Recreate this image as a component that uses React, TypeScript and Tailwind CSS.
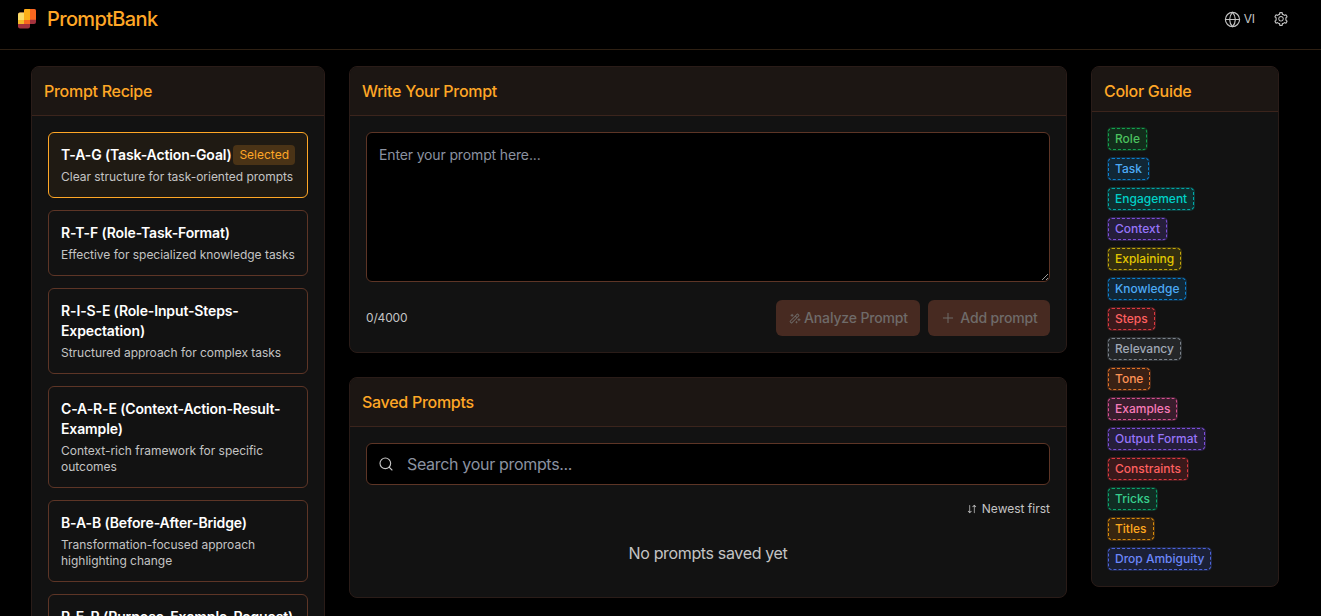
import React from "react";
import { Globe, Search, Plus } from "lucide-react";
import { PiMagicWand, PiArrowsDownUp } from "react-icons/pi";
import { AiOutlineSetting } from "react-icons/ai";

const recipes = [
  { title: "T-A-G (Task-Action-Goal)", text: "Clear structure for task-oriented prompts", selected: true },
  { title: "R-T-F (Role-Task-Format)", text: "Effective for specialized knowledge tasks" },
  { title: "R-I-S-E (Role-Input-Steps-Expectation)", text: "Structured approach for complex tasks" },
  { title: "C-A-R-E (Context-Action-Result-Example)", text: "Context-rich framework for specific outcomes" },
  { title: "B-A-B (Before-After-Bridge)", text: "Transformation-focused approach highlighting change" },
  { title: "P-E-R (Purpose-Example-Request)", text: "Clear purpose with supporting examples" },
];

const tags = [
  { name: "Role", style: "text-[#4cc35f] bg-[#122d1b] border-[#12a150] shadow-[0_0_0_1px_#12361f]" },
  { name: "Task", style: "text-[#4dabf7] bg-[#112736] border-[#0c80cf] shadow-[0_0_0_1px_#112c40]" },
  { name: "Engagement", style: "text-[#00d1c7] bg-[#0f2e2e] border-[#00a8a8] shadow-[0_0_0_1px_#0f3838]" },
  { name: "Context", style: "text-[#9775fa] bg-[#261e3b] border-[#7c4fd8] shadow-[0_0_0_1px_#2c2148]" },
  { name: "Explaining", style: "text-[#e3c800] bg-[#332e10] border-[#c2a70a] shadow-[0_0_0_1px_#3b3410]" },
  { name: "Knowledge", style: "text-[#4dabf7] bg-[#112736] border-[#0c80cf] shadow-[0_0_0_1px_#112c40]" },
  { name: "Steps", style: "text-[#ff6060] bg-[#3a191b] border-[#dc3a3f] shadow-[0_0_0_1px_#451b1e]" },
  { name: "Relevancy", style: "text-[#a0a9b6] bg-[#242628] border-[#7b838c] shadow-[0_0_0_1px_#2b2e31]" },
  { name: "Tone", style: "text-[#ff9355] bg-[#3a2115] border-[#e07328] shadow-[0_0_0_1px_#472717]" },
  { name: "Examples", style: "text-[#f77ab8] bg-[#391d2d] border-[#d6508f] shadow-[0_0_0_1px_#452135]" },
  { name: "Output Format", style: "text-[#9775fa] bg-[#261e3b] border-[#7c4fd8] shadow-[0_0_0_1px_#2c2148]" },
  { name: "Constraints", style: "text-[#ff6060] bg-[#3a191b] border-[#dc3a3f] shadow-[0_0_0_1px_#451b1e]" },
  { name: "Tricks", style: "text-[#38d08e] bg-[#102d23] border-[#0aa56e] shadow-[0_0_0_1px_#10372a]" },
  { name: "Titles", style: "text-[#ffa91f] bg-[#382610] border-[#d98c0b] shadow-[0_0_0_1px_#432c10]" },
  { name: "Drop Ambiguity", style: "text-[#6c87fa] bg-[#1b2036] border-[#4c63d9] shadow-[0_0_0_1px_#1e2543]" },
];

function Logo() {
  return (
    <svg width="18" height="20" viewBox="0 0 18 20">
      <rect x="0" y="3.5" width="12" height="16" rx="2" fill="#a3323d" />
      <rect x="6" y="0" width="12" height="15" rx="2" fill="#a3323d" />
      <path d="M6 1.500a1.500 1.500 0 0 1 1.500-1.500H16a2 2 0 0 1 2 2v8.800H6z" fill="#f9671f" />
      <path d="M6 1.500a1.500 1.500 0 0 1 1.500-1.500H12v11H6z" fill="#fcaf17" />
      <path d="M0 5.500a2 2 0 0 1 2-2h4V15H0z" fill="#fbdc68" />
      <path d="M0 11h12v4H0z" fill="#f5b928" />
      <path d="M6 11h6v4H6z" fill="#f9671f" />
    </svg>
  );
}

function Panel({ title, tight, className, children }: {
  title: string;
  tight?: boolean;
  className: string;
  children: React.ReactNode;
}) {
  return (
    <section className={`overflow-hidden rounded-lg border border-[#2a1c18] bg-[#121212] ${className}`}>
      <h2
        className={`border-b border-[#3b241c] bg-[#1c1613] px-3 pt-3 text-base font-[550] tracking-[-0.28px] text-[#ffa726] ${tight ? "pb-2" : "pb-3"}`}
      >
        {title}
      </h2>
      {children}
    </section>
  );
}

export default function App() {
  return (
    <div className="h-[616px] overflow-hidden bg-black font-['Inter',sans-serif] text-[#c4c4c4]">
      <header className="flex h-[50px] items-start justify-between border-b border-[#2e2013] pr-8 pl-[18px]">
        <div className="flex items-center gap-[11px] pt-[5px]">
          <Logo />
          <h1 className="text-xl leading-7 font-[550] tracking-[-0.65px] text-[#ffa726]">PromptBank</h1>
        </div>
        <div className="flex items-center gap-[18px] pt-[11px]">
          <button className="flex h-4 items-center gap-[3px] text-xs tracking-[-0.1px]">
            <Globe size={17} strokeWidth={1.6} />
            VI
          </button>
          <AiOutlineSetting size={16} />
        </div>
      </header>

      <main className="flex items-start gap-6 pt-4 pl-[31px]">
        <Panel title="Prompt Recipe" className="h-[760px] w-[294px] shrink-0">
          <div className="flex flex-col gap-3 p-4">
            {recipes.map((r) => (
              <div
                key={r.title}
                className={`rounded-md border p-3 ${r.selected ? "border-[#ffa726] bg-[#1f1a13]" : "border-[#5d3526]"}`}
              >
                <div className="flex items-center justify-between">
                  <h3 className="text-sm leading-5 font-semibold tracking-[-0.13px] whitespace-normal text-white">{r.title}</h3>
                  {r.selected && (
                    <span className="rounded bg-[#4a3316] px-1.5 py-0.5 text-xs leading-4 text-[#ffa726]">Selected</span>
                  )}
                </div>
                <p className="mt-1 -mr-1 text-xs leading-4 tracking-[-0.02px]">{r.text}</p>
              </div>
            ))}
          </div>
        </Panel>

        <div className="flex w-[718px] shrink-0 flex-col gap-6">
          <Panel title="Write Your Prompt" className="h-[287px]">
            <div className="p-4">
              <textarea
                placeholder="Enter your prompt here..."
                className="block h-[150px] w-full resize-y rounded-md border border-[#5d3526] bg-black p-3 text-sm tracking-[-0.14px] placeholder:text-[#8b92a0]"
              />
              <div className="mt-[18px] flex items-center justify-between">
                <span className="text-xs tracking-[-0.15px]">0/4000</span>
                <div className="flex gap-2 text-sm font-[550] tracking-[-0.15px] text-[#6f6b69]">
                  <button className="flex h-9 w-36 items-center justify-center gap-[3px] rounded-md bg-[#472a21]">
                    <PiMagicWand size={13} />
                    Analyze Prompt
                  </button>
                  <button className="flex h-9 w-[122px] items-center justify-center gap-1 rounded-md bg-[#472a21]">
                    <Plus size={16} strokeWidth={1.5} />
                    Add prompt
                  </button>
                </div>
              </div>
            </div>
          </Panel>

          <Panel title="Saved Prompts" className="h-[221px]">
            <div className="p-4">
              <div className="flex h-[42px] items-center gap-[13px] rounded-md border border-[#5d3526] bg-black pr-3 pl-[11px]">
                <Search size={16} strokeWidth={1.7} />
                <span className="text-base tracking-[-0.32px] text-[#8b92a0]">Search your prompts...</span>
              </div>
              <div className="mt-4 flex h-4 items-center justify-end gap-1 text-xs">
                <PiArrowsDownUp size={12} />
                Newest first
              </div>
              <p className="mt-6 text-center text-base tracking-[-0.35px]">No prompts saved yet</p>
            </div>
          </Panel>
        </div>

        <Panel title="Color Guide" tight className="h-[521px] w-[188px] shrink-0">
          <div className="flex flex-col items-start gap-2 px-4 pt-4">
            {tags.map((t) => (
              <span
                key={t.name}
                className={`rounded border border-dashed px-1.5 py-0.5 text-xs leading-4 font-[550] ${t.style}`}
              >
                {t.name}
              </span>
            ))}
          </div>
        </Panel>
      </main>
    </div>
  );
}
